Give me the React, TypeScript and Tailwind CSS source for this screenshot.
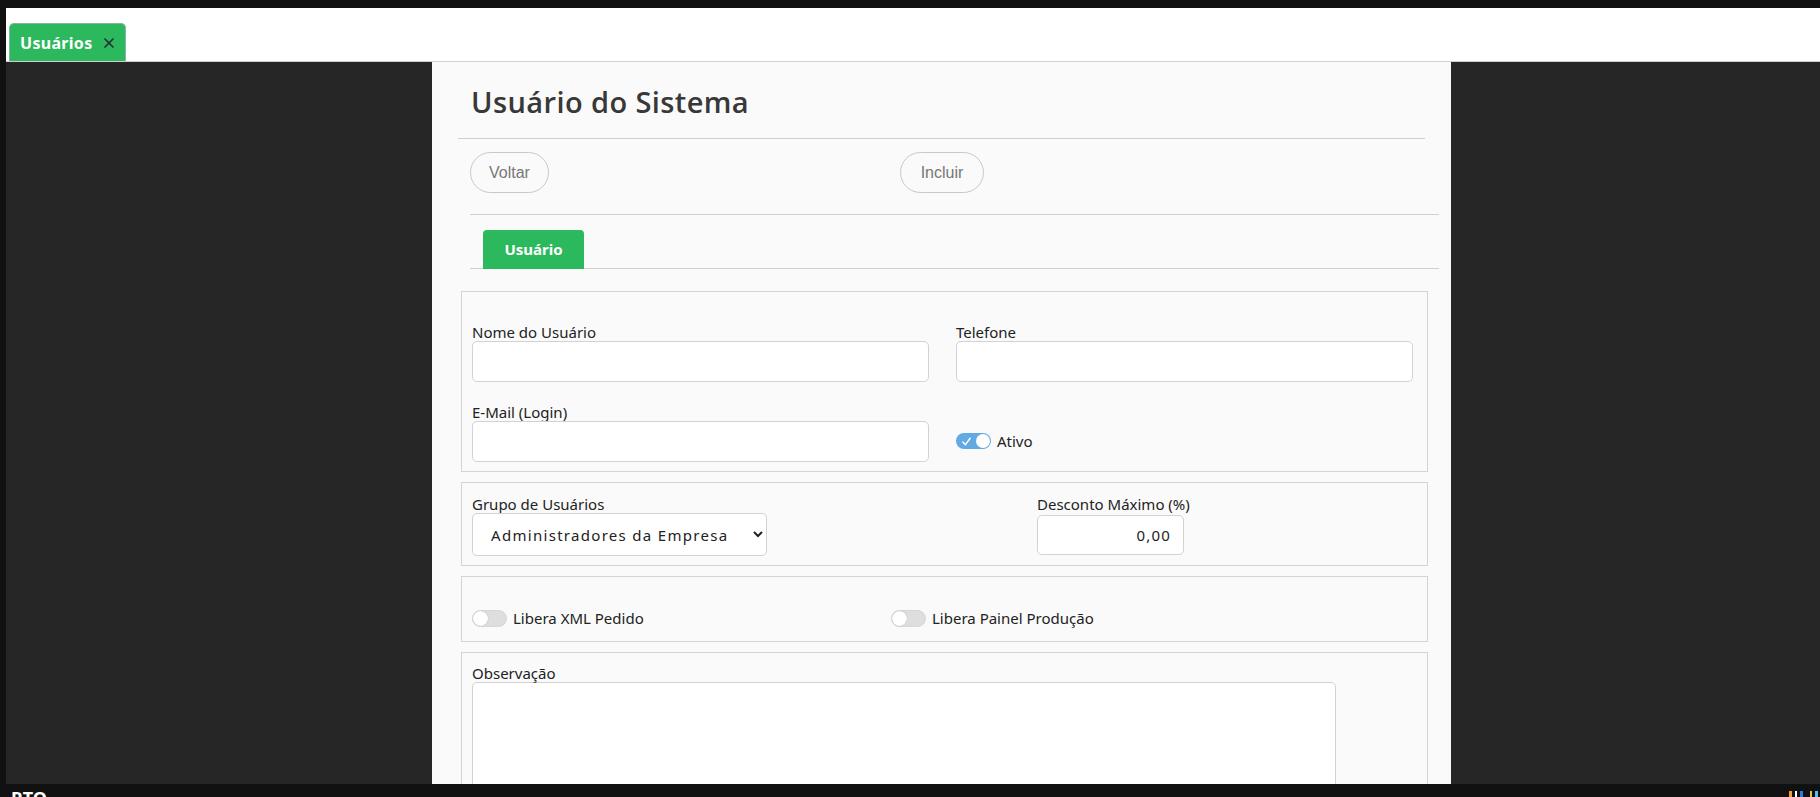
import { X } from 'lucide-react'

const label = 'block text-[15px] leading-[18px] text-[#222]'
const input =
  'h-[41px] w-full rounded-[5px] border border-[#d2d2d2] bg-white px-3 text-[14px] outline-none'

function Toggle({ on, text }: { on?: boolean; text: string }) {
  return (
    <label className="flex items-center gap-[6px]">
      {on ? (
        <span className="relative flex h-[16px] w-[35px] items-center rounded-full bg-[#63a9e3]">
          <svg viewBox="0 0 12 12" className="ml-[5px] h-[11px] w-[11px]" fill="none" stroke="white" strokeWidth={1.6} strokeLinecap="round">
            <path d="M2 6.5 L4.8 9.5 L10 2.5" />
          </svg>
          <span className="absolute right-[1px] top-[1px] h-[14px] w-[14px] rounded-full bg-white" />
        </span>
      ) : (
        <span className="relative flex h-[17px] w-[35px] items-center rounded-full border border-[#d6d6d6] bg-[#dedede]">
          <span className="absolute left-0 top-0 h-[15px] w-[15px] rounded-full bg-white shadow-[0_0_1px_rgba(0,0,0,0.3)]" />
        </span>
      )}
      <span className="text-[15px] leading-[18px] text-[#222]">{text}</span>
    </label>
  )
}

export default function App() {
  return (
    <div
      className="flex h-[797px] w-[1820px] flex-col overflow-hidden bg-[#111]"
      style={{ fontFamily: '"Noto Sans", "Open Sans", sans-serif' }}
    >
      <div className="h-[8px]" />

      {/* aba */}
      <div className="ml-[6px] flex h-[54px] items-end border-b border-[#cfcfcf] bg-white pl-[3px]">
        <div className="flex h-[38px] w-[117px] items-center gap-[9px] rounded-t-[5px] border border-b-0 border-[#7fb7a0] bg-[#2cb85c] pl-[10px]">
          <span className="text-[16px] font-bold tracking-[0.3px] text-white">Usuários</span>
          <X className="h-[16px] w-[16px] text-[#263238]" strokeWidth={2.6} />
        </div>
      </div>

      <div className="ml-[6px] flex min-h-0 flex-1 bg-[#262626]">
        <div className="ml-[426px] w-[1019px] overflow-hidden bg-[#fafafa]">
          <div className="mx-[26px] border-b border-[#cfcfcf] pt-[20px] pb-[16px] pl-[13px]">
            <h1
              className="text-[29px] leading-[40px] font-semibold tracking-[0.4px] text-[#383838]"
              style={{ fontFamily: '"Open Sans", "Noto Sans", sans-serif' }}
            >
              Usuário do Sistema
            </h1>
          </div>

          <div className="ml-[38px] mr-[12px]">
            <div className="flex h-[76px] items-start border-b border-[#cfcfcf] pt-[13px]">
              <button
                className="h-[41px] w-[79px] rounded-full border border-[#c8c8c8] text-[16px] text-[#777]"
                style={{ fontFamily: '"Liberation Sans", sans-serif' }}
              >
                Voltar
              </button>
              <button
                className="ml-[351px] h-[41px] w-[84px] rounded-full border border-[#c8c8c8] text-[16px] text-[#777]"
                style={{ fontFamily: '"Liberation Sans", sans-serif' }}
              >
                Incluir
              </button>
            </div>
            <div className="flex h-[54px] items-end border-b border-[#cfcfcf] pl-[13px]">
              <div className="-mb-px flex h-[39px] w-[101px] items-center justify-center rounded-t-[4px] bg-[#2cb85c] text-[15px] font-bold text-white">
                Usuário
              </div>
            </div>
          </div>

          <div className="mt-[22px] mr-[23px] ml-[29px] flex flex-col gap-[10px]">
            <section className="border border-[#d4d4d4] pt-[31px] pr-[14px] pb-[9px] pl-[10px]">
              <div className="grid grid-cols-2 gap-x-[27px] gap-y-[21px]">
                <div>
                  <span className={label}>Nome do Usuário</span>
                  <input className={input} />
                </div>
                <div>
                  <span className={label}>Telefone</span>
                  <input className={input} />
                </div>
                <div>
                  <span className={label}>E-Mail (Login)</span>
                  <input className={input} />
                </div>
                <div className="flex items-end pb-[12px]">
                  <Toggle on text="Ativo" />
                </div>
              </div>
            </section>

            <section className="flex border border-[#d4d4d4] pt-[12px] pb-[9px] pl-[10px]">
              <div className="w-[565px]">
                <span className={label}>Grupo de Usuários</span>
                <select
                  className="h-[43px] w-[295px] rounded-[5px] border border-[#d2d2d2] bg-white pl-[14px] pr-[8px] text-[15px] tracking-[1.3px] text-[#222] outline-none"
                  defaultValue="adm"
                >
                  <option value="adm">Administradores da Empresa</option>
                </select>
              </div>
              <div>
                <span className={label}>Desconto Máximo (%)</span>
                <input
                  className="mt-[2px] h-[40px] w-[147px] rounded-[5px] border border-[#d2d2d2] bg-white px-[12px] text-right text-[15px] tracking-[1.2px] text-[#222] outline-none"
                  defaultValue="0,00"
                />
              </div>
            </section>

            <section className="flex border border-[#d4d4d4] pt-[32px] pb-[14px] pl-[10px]">
              <div className="w-[419px]">
                <Toggle text="Libera XML Pedido" />
              </div>
              <Toggle text="Libera Painel Produção" />
            </section>

            <section className="border border-[#d4d4d4] pt-[11px] pl-[10px]">
              <span className={label}>Observação</span>
              <textarea className="block h-[200px] w-[864px] resize-none rounded-[5px] border border-[#d2d2d2] bg-white outline-none" />
            </section>
          </div>
        </div>
      </div>

      {/* rodapé */}
      <div className="flex h-[13px] shrink-0 items-start justify-between overflow-hidden bg-[#111] pl-[11px] pr-[2px]">
        <div className="flex items-baseline gap-[3px] pt-[5px] leading-none">
          <span className="text-[18px] font-bold text-white">RTO</span>
          <span className="text-[11px] text-[#aaa]">Soft</span>
        </div>
        <div className="flex gap-[3px] pt-[7px]">
          <span className="h-[6px] w-[3px] bg-[#f0a030]" />
          <span className="h-[6px] w-[2px] bg-white" />
          <span className="h-[6px] w-[3px] bg-[#2c7be5]" />
          <span className="ml-[4px] h-[6px] w-[2px] bg-[#f0c040]" />
          <span className="h-[6px] w-[3px] bg-[#4fc3f7]" />
        </div>
      </div>
    </div>
  )
}
